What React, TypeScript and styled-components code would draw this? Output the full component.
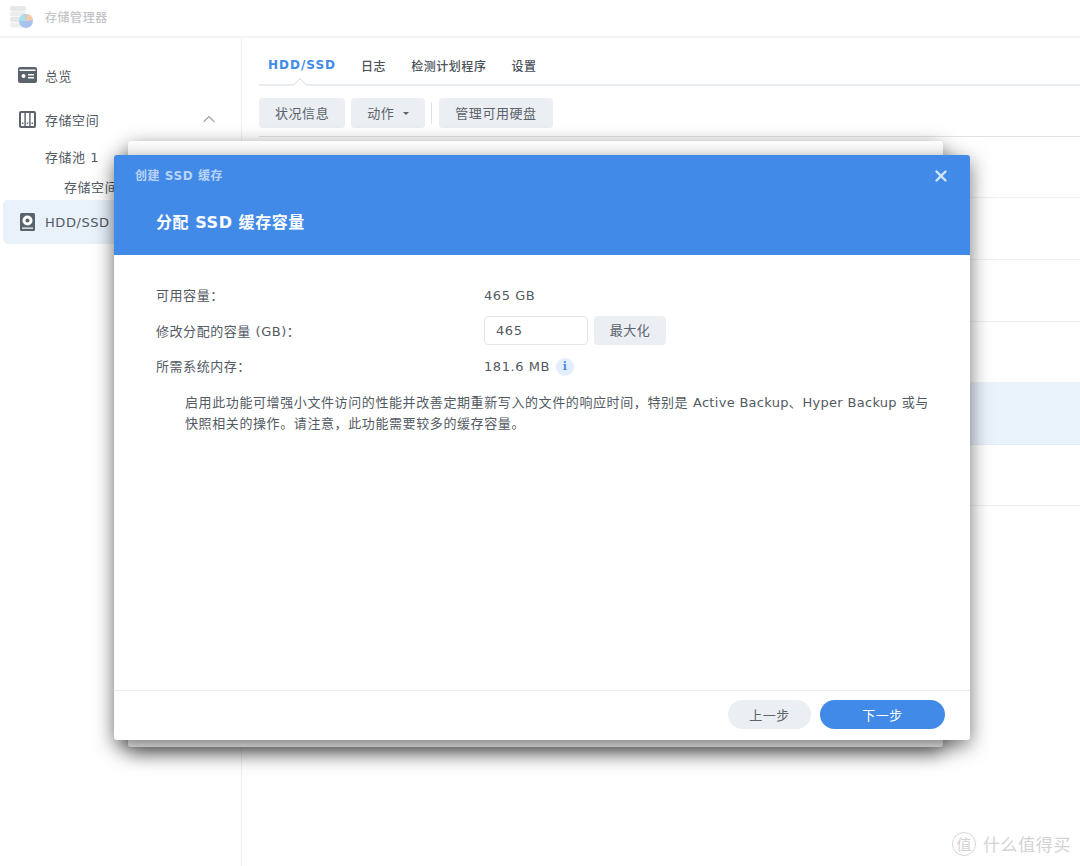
import { ReactNode } from "react"
import styled, { createGlobalStyle } from "styled-components"
import { ChevronUp, X } from "lucide-react"

const GlobalStyle = createGlobalStyle`
  html, body {
    margin: 0;
    padding: 0;
    background: #fff;
  }
  * {
    box-sizing: border-box;
  }
  body {
    font-family: "DejaVu Sans", "Noto Sans CJK SC", sans-serif;
    font-size: 13px;
    letter-spacing: 0.55px;
    color: #525a63;
  }
`

const Page = styled.div`
  position: relative;
  width: 1080px;
  height: 866px;
  overflow: hidden;
  display: flex;
  flex-direction: column;
`

const TitleBar = styled.header`
  height: 38px;
  flex: none;
  display: flex;
  align-items: center;
  gap: 10px;
  padding: 0 0 4px 10px;
  border-bottom: 2px solid #f3f4f6;
  font-size: 12px;
  font-weight: 500;
  color: #c2c4c7;
`

const LogoSvg = styled.svg`
  margin-top: 2px;
`

const Body = styled.div`
  flex: 1;
  display: flex;
  min-height: 0;
`

const Sidebar = styled.nav`
  width: 242px;
  flex: none;
  padding: 15px 0 0 3px;
  border-right: 1px solid #edeff2;
  white-space: nowrap;
`

const NavItem = styled.div<{ $active?: boolean; $height?: number; $indent?: number }>`
  display: flex;
  align-items: center;
  width: 238px;
  height: ${(p) => p.$height ?? 44}px;
  padding-left: ${(p) => p.$indent ?? 15}px;
  border-radius: 5px;
  background: ${(p) => (p.$active ? "#e9f1fb" : "transparent")};
`

const NavIcon = styled.span`
  width: 27px;
  flex: none;
  display: flex;
  justify-content: center;
  padding-right: 8px;
`

const NavChevron = styled.span`
  margin-left: auto;
  margin-right: 22px;
  display: flex;
  color: #a6abb1;
`

const Main = styled.main`
  flex: 1;
  padding: 11px 0 0 17px;
  min-width: 0;
`

const Tabs = styled.div`
  position: relative;
  display: flex;
  height: 37px;
  padding: 0 0 3px 9px;
  gap: 25px;
  align-items: center;
  border-bottom: 2px solid #e8ecf1;
  font-size: 12px;
  font-weight: 500;
  color: #4a5158;
`

const Tab = styled.span<{ $active?: boolean }>`
  color: ${(p) => (p.$active ? "#428ae8" : "inherit")};
  font-weight: ${(p) => (p.$active ? 700 : 500)};
  letter-spacing: ${(p) => (p.$active ? "1px" : "inherit")};
`

const TabCaret = styled.span`
  position: absolute;
  left: 36px;
  bottom: -6px;
  width: 10px;
  height: 10px;
  background: #fff;
  border-left: 1px solid #e0e5eb;
  border-top: 1px solid #e0e5eb;
  transform: rotate(45deg);
`

const Toolbar = styled.div`
  display: flex;
  align-items: center;
  gap: 6px;
  height: 51px;
  padding-top: 4px;
  border-bottom: 1px solid #dfe3e8;
`

const ToolButton = styled.button`
  height: 30px;
  padding: 0 16px 2px;
  border: 0;
  border-radius: 4px;
  background: #ebeef3;
  color: #5b636b;
  font: inherit;
  letter-spacing: inherit;
  display: flex;
  align-items: center;
  gap: 9px;
`

const Caret = styled.span`
  width: 0;
  height: 0;
  margin-top: 2px;
  border-left: 3.5px solid transparent;
  border-right: 3.5px solid transparent;
  border-top: 3.5px solid #5b636b;
`

const ToolDivider = styled.span`
  width: 1px;
  height: 22px;
  margin-right: 1px;
  background: #dfe3e8;
`

const DiskRow = styled.div<{ $selected?: boolean; $height: number }>`
  height: ${(p) => p.$height}px;
  background: ${(p) => (p.$selected ? "#e9f1fb" : "transparent")};
  border-bottom: 1px solid ${(p) => (p.$selected ? "#e3ebf5" : "#eff1f4")};
`

const DialogBack = styled.div`
  position: absolute;
  left: 128px;
  top: 141px;
  width: 815px;
  height: 606px;
  background: #fff;
  border-radius: 3px;
  box-shadow: 0 6px 20px rgba(0, 0, 0, 0.55);
`

const Dialog = styled.section`
  position: absolute;
  left: 114px;
  top: 155px;
  width: 856px;
  height: 585px;
  display: flex;
  flex-direction: column;
  background: #fff;
  border-radius: 3px;
  box-shadow: 0 6px 20px rgba(0, 0, 0, 0.55);
  overflow: hidden;
`

const DialogHeader = styled.div`
  position: relative;
  height: 100px;
  flex: none;
  background: #428ae8;
  color: #fff;
  padding: 12px 0 0 21px;
`

const DialogCaption = styled.div`
  font-size: 12px;
  font-weight: 700;
  line-height: 18px;
  color: #b9d3f6;
`

const DialogTitle = styled.h2`
  margin: 26px 0 0 21px;
  font-size: 16px;
  font-weight: 700;
  line-height: 24px;
  color: #fff;
`

const CloseButton = styled.span`
  position: absolute;
  top: 12px;
  right: 20px;
  display: flex;
  color: #d5e5fa;
`

const DialogBody = styled.div`
  flex: 1;
  padding: 23px 42px 0;
`

const FormRow = styled.div<{ $height: number }>`
  display: flex;
  align-items: center;
  height: ${(p) => p.$height}px;
  line-height: 18px;
`

const FormLabel = styled.div`
  width: 328px;
  flex: none;
`

const NumberBox = styled.div`
  width: 104px;
  height: 29px;
  margin-bottom: 2px;
  padding: 1px 0 0 11px;
  display: flex;
  align-items: center;
  border: 1px solid #e1e5ea;
  border-radius: 4px;
  background: #fff;
`

const MaxButton = styled(ToolButton)`
  width: 72px;
  height: 29px;
  margin: 0 0 2px 6px;
  padding: 1px 0 0;
  justify-content: center;
`

const InfoBadge = styled.span`
  width: 18px;
  height: 18px;
  margin-left: 6px;
  border-radius: 50%;
  background: #e3edfb;
  color: #428ae8;
  display: flex;
  align-items: center;
  justify-content: center;
  font-size: 11px;
  font-weight: 700;
  font-family: "DejaVu Serif", serif;
  letter-spacing: 0;
`

const Note = styled.p`
  margin: 7px 0 0 29px;
  width: 750px;
  line-height: 21px;
  letter-spacing: 0.6px;
`

const Latin = styled.span`
  letter-spacing: 0.3px;
`

const DialogFooter = styled.div`
  flex: none;
  height: 50px;
  padding: 9px 25px 0 0;
  display: flex;
  justify-content: flex-end;
  gap: 9px;
  border-top: 1px solid #e9ecf0;
`

const PillButton = styled.button<{ $primary?: boolean }>`
  width: ${(p) => (p.$primary ? 125 : 83)}px;
  height: 29px;
  border: 0;
  border-radius: 15px;
  font: inherit;
  letter-spacing: inherit;
  background: ${(p) => (p.$primary ? "#428ae8" : "#ebeef3")};
  color: ${(p) => (p.$primary ? "#fff" : "#5b636b")};
`

const Watermark = styled.div`
  position: absolute;
  right: 9px;
  bottom: 10px;
  display: flex;
  align-items: center;
  gap: 7px;
  font-size: 17px;
  letter-spacing: 0.6px;
  color: #d3d3d3;
`

const WatermarkBadge = styled.span`
  width: 24px;
  height: 24px;
  border: 1.5px solid #d6d6d6;
  border-radius: 50%;
  display: flex;
  align-items: center;
  justify-content: center;
  font-size: 15px;
  letter-spacing: 0;
`

function AppLogo() {
  return (
    <LogoSvg width="25" height="24" viewBox="0 0 25 24">
      <rect x="0" y="1" width="16" height="5" rx="2" fill="#e7e7e7" />
      <rect x="0" y="6.5" width="16" height="5" rx="2" fill="#ececec" />
      <rect x="0" y="12" width="16" height="5" rx="2" fill="#e7e7e7" />
      <rect x="0" y="17.5" width="16" height="5" rx="2" fill="#efefef" />
      <circle cx="16" cy="16" r="7" fill="#a9c2f0" />
      <path d="M16 16 L9 16 A7 7 0 0 1 15 9 Z" fill="#a7e2e8" />
      <path d="M16 16 L16 9 A7 7 0 0 1 23 15 Z" fill="#f4c9a6" />
    </LogoSvg>
  )
}

function OverviewIcon() {
  return (
    <svg width="19" height="16" viewBox="0 0 19 16">
      <rect width="19" height="16" rx="2" fill="#5a626b" />
      <rect x="1.5" y="2.5" width="16" height="1.5" fill="#fff" />
      <circle cx="5.5" cy="9" r="2" fill="#fff" />
      <rect x="10" y="7" width="6" height="1.5" fill="#fff" />
      <rect x="10" y="10" width="6" height="1.5" fill="#fff" />
    </svg>
  )
}

function StorageIcon() {
  return (
    <svg width="17" height="17" viewBox="0 0 17 17">
      <rect width="17" height="17" rx="2" fill="#5a626b" />
      <rect x="2" y="2" width="3.4" height="13" fill="#fff" />
      <rect x="6.8" y="2" width="3.4" height="13" fill="#fff" />
      <rect x="11.6" y="2" width="3.4" height="13" fill="#fff" />
      <rect x="3" y="11.5" width="1.4" height="1.5" fill="#5a626b" />
      <rect x="7.8" y="11.5" width="1.4" height="1.5" fill="#5a626b" />
      <rect x="12.6" y="11.5" width="1.4" height="1.5" fill="#5a626b" />
    </svg>
  )
}

function DiskIcon() {
  return (
    <svg width="15" height="18" viewBox="0 0 15 18">
      <rect width="15" height="18" rx="1.5" fill="#5a626b" />
      <circle cx="7.5" cy="7.5" r="5" fill="#fff" />
      <circle cx="7.5" cy="7.5" r="2" fill="#5a626b" />
      <rect x="2" y="14.5" width="11" height="1.2" fill="#fff" />
    </svg>
  )
}

function SideEntry({ icon, children, active, after }: { icon: ReactNode; children: ReactNode; active?: boolean; after?: ReactNode }) {
  return (
    <NavItem $active={active}>
      <NavIcon>{icon}</NavIcon>
      {children}
      {after}
    </NavItem>
  )
}

export default function App() {
  return (
    <Page>
      <GlobalStyle />
      <TitleBar>
        <AppLogo />
        存储管理器
      </TitleBar>
      <Body>
        <Sidebar>
          <SideEntry icon={<OverviewIcon />}>总览</SideEntry>
          <SideEntry
            icon={<StorageIcon />}
            after={
              <NavChevron>
                <ChevronUp size={20} strokeWidth={1.6} />
              </NavChevron>
            }
          >
            存储空间
          </SideEntry>
          <NavItem $height={31} $indent={42}>存储池 1</NavItem>
          <NavItem $height={28} $indent={61}>存储空间 1</NavItem>
          <SideEntry active icon={<DiskIcon />}>HDD/SSD</SideEntry>
        </Sidebar>
        <Main>
          <Tabs>
            <Tab $active>HDD/SSD</Tab>
            <Tab>日志</Tab>
            <Tab>检测计划程序</Tab>
            <Tab>设置</Tab>
            <TabCaret />
          </Tabs>
          <Toolbar>
            <ToolButton>状况信息</ToolButton>
            <ToolButton>
              动作
              <Caret />
            </ToolButton>
            <ToolDivider />
            <ToolButton>管理可用硬盘</ToolButton>
          </Toolbar>
          <DiskRow $height={61} />
          <DiskRow $height={62} />
          <DiskRow $height={62} />
          <DiskRow $height={61} />
          <DiskRow $height={62} $selected />
          <DiskRow $height={61} />
        </Main>
      </Body>

      <DialogBack />
      <Dialog>
        <DialogHeader>
          <DialogCaption>创建 SSD 缓存</DialogCaption>
          <DialogTitle>分配 SSD 缓存容量</DialogTitle>
          <CloseButton>
            <X size={18} strokeWidth={3.2} />
          </CloseButton>
        </DialogHeader>
        <DialogBody>
          <FormRow $height={36}>
            <FormLabel>{"可用容量\uFF1A"}</FormLabel>
            465 GB
          </FormRow>
          <FormRow $height={35}>
            <FormLabel>{"修改分配的容量 (GB)\uFF1A"}</FormLabel>
            <NumberBox>465</NumberBox>
            <MaxButton>最大化</MaxButton>
          </FormRow>
          <FormRow $height={36}>
            <FormLabel>{"所需系统内存\uFF1A"}</FormLabel>
            181.6 MB
            <InfoBadge>i</InfoBadge>
          </FormRow>
          <Note>
            {"启用此功能可增强小文件访问的性能并改善定期重新写入的文件的响应时间\uFF0C特别是 "}
            <Latin>Active Backup</Latin>、<Latin>Hyper Backup</Latin>
            {" 或与"}
            <br />
            {"快照相关的操作。请注意\uFF0C此功能需要较多的缓存容量。"}
          </Note>
        </DialogBody>
        <DialogFooter>
          <PillButton>上一步</PillButton>
          <PillButton $primary>下一步</PillButton>
        </DialogFooter>
      </Dialog>

      <Watermark>
        <WatermarkBadge>值</WatermarkBadge>
        什么值得买
      </Watermark>
    </Page>
  )
}
